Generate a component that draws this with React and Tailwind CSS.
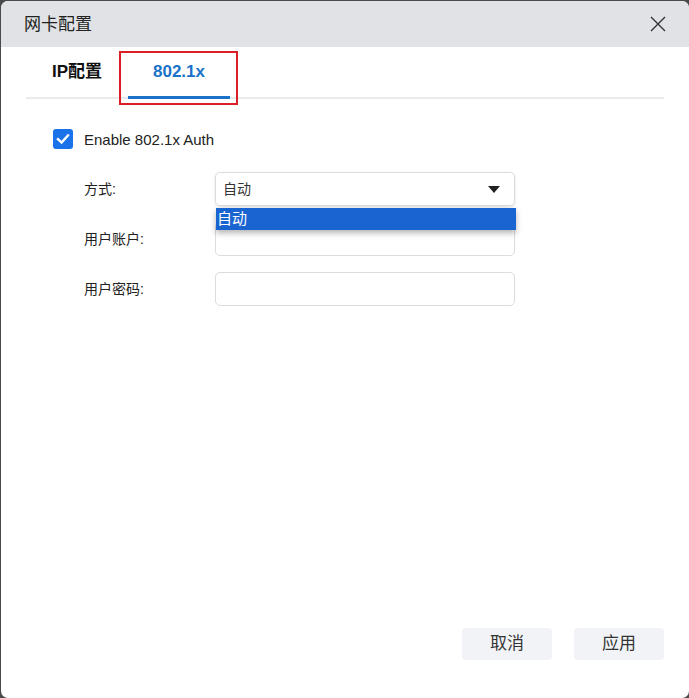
import React from "react";

const font = { fontFamily: '"Liberation Sans", "Noto Sans CJK SC", sans-serif' };

export default function App() {
  return (
    <div className="w-[689px] h-[698px] bg-[#4a4a4a] pt-[1px] pl-[1px] overflow-hidden" style={font}>
      <div className="relative w-[688px] h-[697px] bg-white rounded-[7px] overflow-hidden flex flex-col">
        {/* title bar */}
        <div className="h-[46px] bg-[#e1e2e5] flex items-center justify-between pl-[23px] pr-[22px] shrink-0">
          <span className="text-[17px] text-[#222] leading-none">网卡配置</span>
          <svg width="18" height="18" viewBox="0 0 18 18" className="text-[#333]">
            <path d="M2 2 L16 16 M16 2 L2 16" stroke="currentColor" strokeWidth="1.4" fill="none" />
          </svg>
        </div>
        {/* tabs */}
        <div className="mx-[25px] h-[52px] border-b-2 border-[#ebebeb] flex items-end shrink-0">
          <div className="w-[102px] h-full flex items-center pl-[26px] text-[17px] font-bold text-[#111]">IP配置</div>
          <div className="w-[102px] h-full flex items-center justify-center text-[17px] font-bold text-[#1a73c8] border-b-[3px] border-[#1a73c8] mb-[-2px] pb-[2px]">802.1x</div>
        </div>
        <div className="absolute left-[118px] top-[50px] w-[119px] h-[54px] border-2 border-[#dc1f26]" />
        {/* content */}
        <div className="flex-1 pl-[52px] pt-[30px]">
          <div className="flex items-center gap-[11px] h-[20px]">
            <div className="w-[20px] h-[20px] rounded-[3px] bg-[#1a73e8] flex items-center justify-center">
              <svg width="14" height="14" viewBox="0 0 14 14">
                <path d="M2 7.2 L5.6 10.6 L12 3.4" stroke="white" strokeWidth="2.4" fill="none" strokeLinecap="square" />
              </svg>
            </div>
            <span className="text-[15px] text-[#222] pt-[2px]">Enable 802.1x Auth</span>
          </div>
          <div className="pl-[31px] mt-[23px] flex flex-col gap-[16px]">
            <div className="flex items-center">
              <span className="w-[131px] text-[14px] text-[#222]">方式:</span>
              <div className="relative w-[300px] h-[34px] rounded-[5px] border border-[#dcdcdc] shadow-[0_1px_3px_rgba(0,0,0,0.12)] flex items-center justify-between pl-[7px] pr-[14px]">
                <span className="text-[14px] text-[#333]">自动</span>
                <svg width="12" height="7" viewBox="0 0 12 7">
                  <path d="M0 0 H12 L6 7 Z" fill="#222" />
                </svg>
                <div className="absolute left-0 top-[35px] w-[300px] h-[22px] bg-[#1a64d2] text-white text-[15px] leading-[22px] pl-[1px] z-10 shadow-[0_3px_6px_rgba(0,0,0,0.3)]">自动</div>
              </div>
            </div>
            <div className="flex items-center">
              <span className="w-[131px] text-[14px] text-[#222]">用户账户:</span>
              <div className="w-[300px] h-[34px] rounded-[5px] border border-[#dcdcdc]" />
            </div>
            <div className="flex items-center">
              <span className="w-[131px] text-[14px] text-[#222]">用户密码:</span>
              <div className="w-[300px] h-[34px] rounded-[5px] border border-[#dcdcdc]" />
            </div>
          </div>
        </div>
        {/* footer */}
        <div className="flex justify-end gap-[22px] pr-[25px] pb-[38px] shrink-0">
          <button className="w-[90px] h-[32px] rounded-[4px] bg-[#f2f3f6] text-[17px] text-[#333]">取消</button>
          <button className="w-[90px] h-[32px] rounded-[4px] bg-[#f2f3f6] text-[17px] text-[#333]">应用</button>
        </div>
      </div>
    </div>
  );
}
